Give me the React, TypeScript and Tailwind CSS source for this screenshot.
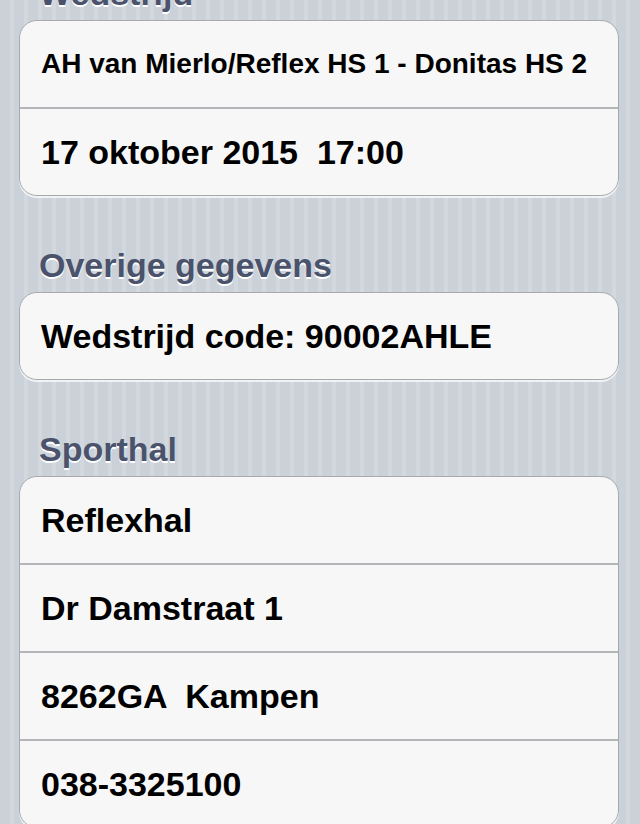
const sections = [
    {title: "Wedstrijd", rows: ["AH van Mierlo/Reflex HS 1 - Donitas HS 2", "17 oktober 2015  17:00"]},
    {title: "Overige gegevens", rows: ["Wedstrijd code: 90002AHLE"]},
    {title: "Sporthal", rows: ["Reflexhal", "Dr Damstraat 1", "8262GA  Kampen", "038-3325100"]},
];

export default function App() {
    return (
        <main className="h-[824px] w-[640px] overflow-hidden bg-[repeating-linear-gradient(90deg,#cad1d9_0px,#cad1d9_10px,#d2d8de_10px,#d2d8de_14px)] font-['Liberation_Sans',Arial,sans-serif]">
            <div className="-mt-[76px]">
                {sections.map((section) => (
                    <section key={section.title}>
                        <div className="flex h-[96px] items-end pb-[7px] pl-[39px]">
                            <h2 className="text-[34px] leading-[40px] font-bold text-[#4a536b] [text-shadow:0_2px_0_#ffffff]">
                                {section.title}
                            </h2>
                        </div>
                        <div className="ml-[19px] mr-[21px] overflow-hidden rounded-[18px] border border-[#a6a9ae] bg-[#f7f7f7] shadow-[0_2px_0_rgba(255,255,255,0.7)]">
                            {section.rows.map((row, i) => (
                                <div
                                    key={row}
                                    className={
                                        i === 0
                                            ? "flex h-[86px] items-center pl-[21px] text-black font-bold"
                                            : "flex h-[88px] items-center border-t-2 border-[#b4b5b8] pl-[21px] text-black font-bold"
                                    }
                                >
                                    <span className={row.length > 30 ? "text-[28px] whitespace-pre" : "text-[34px] whitespace-pre"}>
                                        {row}
                                    </span>
                                </div>
                            ))}
                        </div>
                    </section>
                ))}
            </div>
        </main>
    );
}
